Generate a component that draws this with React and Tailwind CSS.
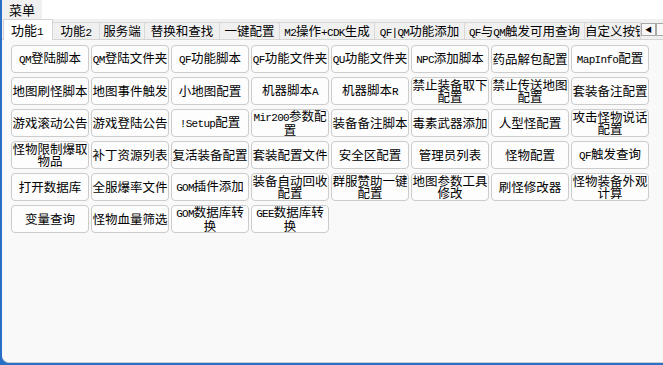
const tabs = [
  { label: "功能1", w: 50, active: true },
  { label: "功能2", w: 47 },
  { label: "服务端", w: 45 },
  { label: "替换和查找", w: 75 },
  { label: "一键配置", w: 60 },
  { label: "M2操作+CDK生成", w: 95 },
  { label: "QF|QM功能添加", w: 90 },
  { label: "QF与QM触发可用查询", w: 120 },
  { label: "自定义按钮", w: 56 },
];

// 两行的按钮用数组写
const buttons = [
  "QM登陆脚本", "QM登陆文件夹", "QF功能脚本", "QF功能文件夹", "QU功能文件夹", "NPC添加脚本", "药品解包配置", "MapInfo配置",
  "地图刷怪脚本", "地图事件触发", "小地图配置", "机器脚本A", "机器脚本R", ["禁止装备取下", "配置"], ["禁止传送地图", "配置"], "套装备注配置",
  "游戏滚动公告", "游戏登陆公告", "!Setup配置", ["Mir200参数配", "置"], "装备备注脚本", "毒素武器添加", "人型怪配置", ["攻击怪物说话", "配置"],
  ["怪物限制爆取", "物品"], "补丁资源列表", "复活装备配置", "套装配置文件", "安全区配置", "管理员列表", "怪物配置", "QF触发查询",
  "打开数据库", "全服爆率文件", "GOM插件添加", ["装备自动回收", "配置"], ["群服赞助一键", "配置"], ["地图参数工具", "修改"], "刷怪修改器", ["怪物装备外观", "计算"],
  "变量查询", "怪物血量筛选", ["GOM数据库转", "换"], ["GEE数据库转", "换"],
];

// 拉丁字母用窄一点的等宽字
function Txt({ s }) {
  const parts = s.split(/([A-Za-z0-9!+|]+)/).filter(Boolean);
  return (
    <>
      {parts.map((p, i) =>
        /^[A-Za-z0-9!+|]+$/.test(p) ? (
          <span
            key={i}
            className="text-[11px] tracking-[-0.7px]"
            style={{ fontFamily: '"Liberation Mono", monospace' }}
          >
            {p}
          </span>
        ) : (
          <span key={i}>{p}</span>
        )
      )}
    </>
  );
}

export default function App() {
  return (
    <div
      className="w-[663px] h-[365px] bg-[#2a6fc6] pl-[2px] pb-[2px] text-black"
      style={{ fontFamily: '"Noto Sans CJK SC", "Liberation Sans", sans-serif' }}
    >
      <div className="h-full flex flex-col bg-[#f9f9f9] rounded-bl-[7px] border-b border-[#cfcfcf] overflow-hidden">
        {/* 菜单栏 */}
        <div className="h-[19px] bg-white flex shrink-0">
          <div className="px-[7px] bg-[#f0f0f0] text-[13px] leading-[19px]">菜单</div>
        </div>

        {/* 选项卡 */}
        <div className="h-[20px] bg-[#f0f0f0] flex items-end pl-[1px] shrink-0 relative">
          {tabs.map((t) =>
            t.active ? (
              <div
                key={t.label}
                className="h-[21px] bg-white border border-b-0 border-[#d4d4d4] text-[13px] leading-[19px] pl-[7px] -mb-px z-10 shrink-0"
                style={{ width: t.w }}
              >
                <Txt s={t.label} />
              </div>
            ) : (
              <div
                key={t.label}
                className="h-[17px] bg-[#f0f0f0] border-r border-t border-[#d9d9d9] text-[12.5px] leading-[16px] text-center whitespace-nowrap overflow-hidden shrink-0"
                style={{ width: t.w }}
              >
                <Txt s={t.label} />
              </div>
            )
          )}
          <div className="ml-auto mb-[3px] flex shrink-0">
            <div className="w-[15px] h-[13px] bg-[#f7f7f7] border border-[#a8a8a8] flex items-center justify-center text-[7px] leading-none">
              ◀
            </div>
            <div className="w-[8px] h-[13px] bg-[#f7f7f7] border border-r-0 border-[#a8a8a8]" />
          </div>
        </div>

        {/* 按钮区 */}
        <div className="flex-1 border-t border-[#d4d4d4] pl-[9px] pt-[5px]">
          <div className="grid grid-cols-[repeat(8,78px)] auto-rows-[28px] gap-x-[2px] gap-y-[4px]">
            {buttons.map((b, i) => (
              <div
                key={i}
                className="bg-[#fdfdfd] border border-[#cccccc] rounded-[4px] flex flex-col items-center justify-center text-[12.5px] leading-[12px] whitespace-nowrap"
              >
                {Array.isArray(b) ? (
                  <>
                    <span><Txt s={b[0]} /></span>
                    <span><Txt s={b[1]} /></span>
                  </>
                ) : (
                  <span><Txt s={b} /></span>
                )}
              </div>
            ))}
          </div>
        </div>
      </div>
    </div>
  );
}
